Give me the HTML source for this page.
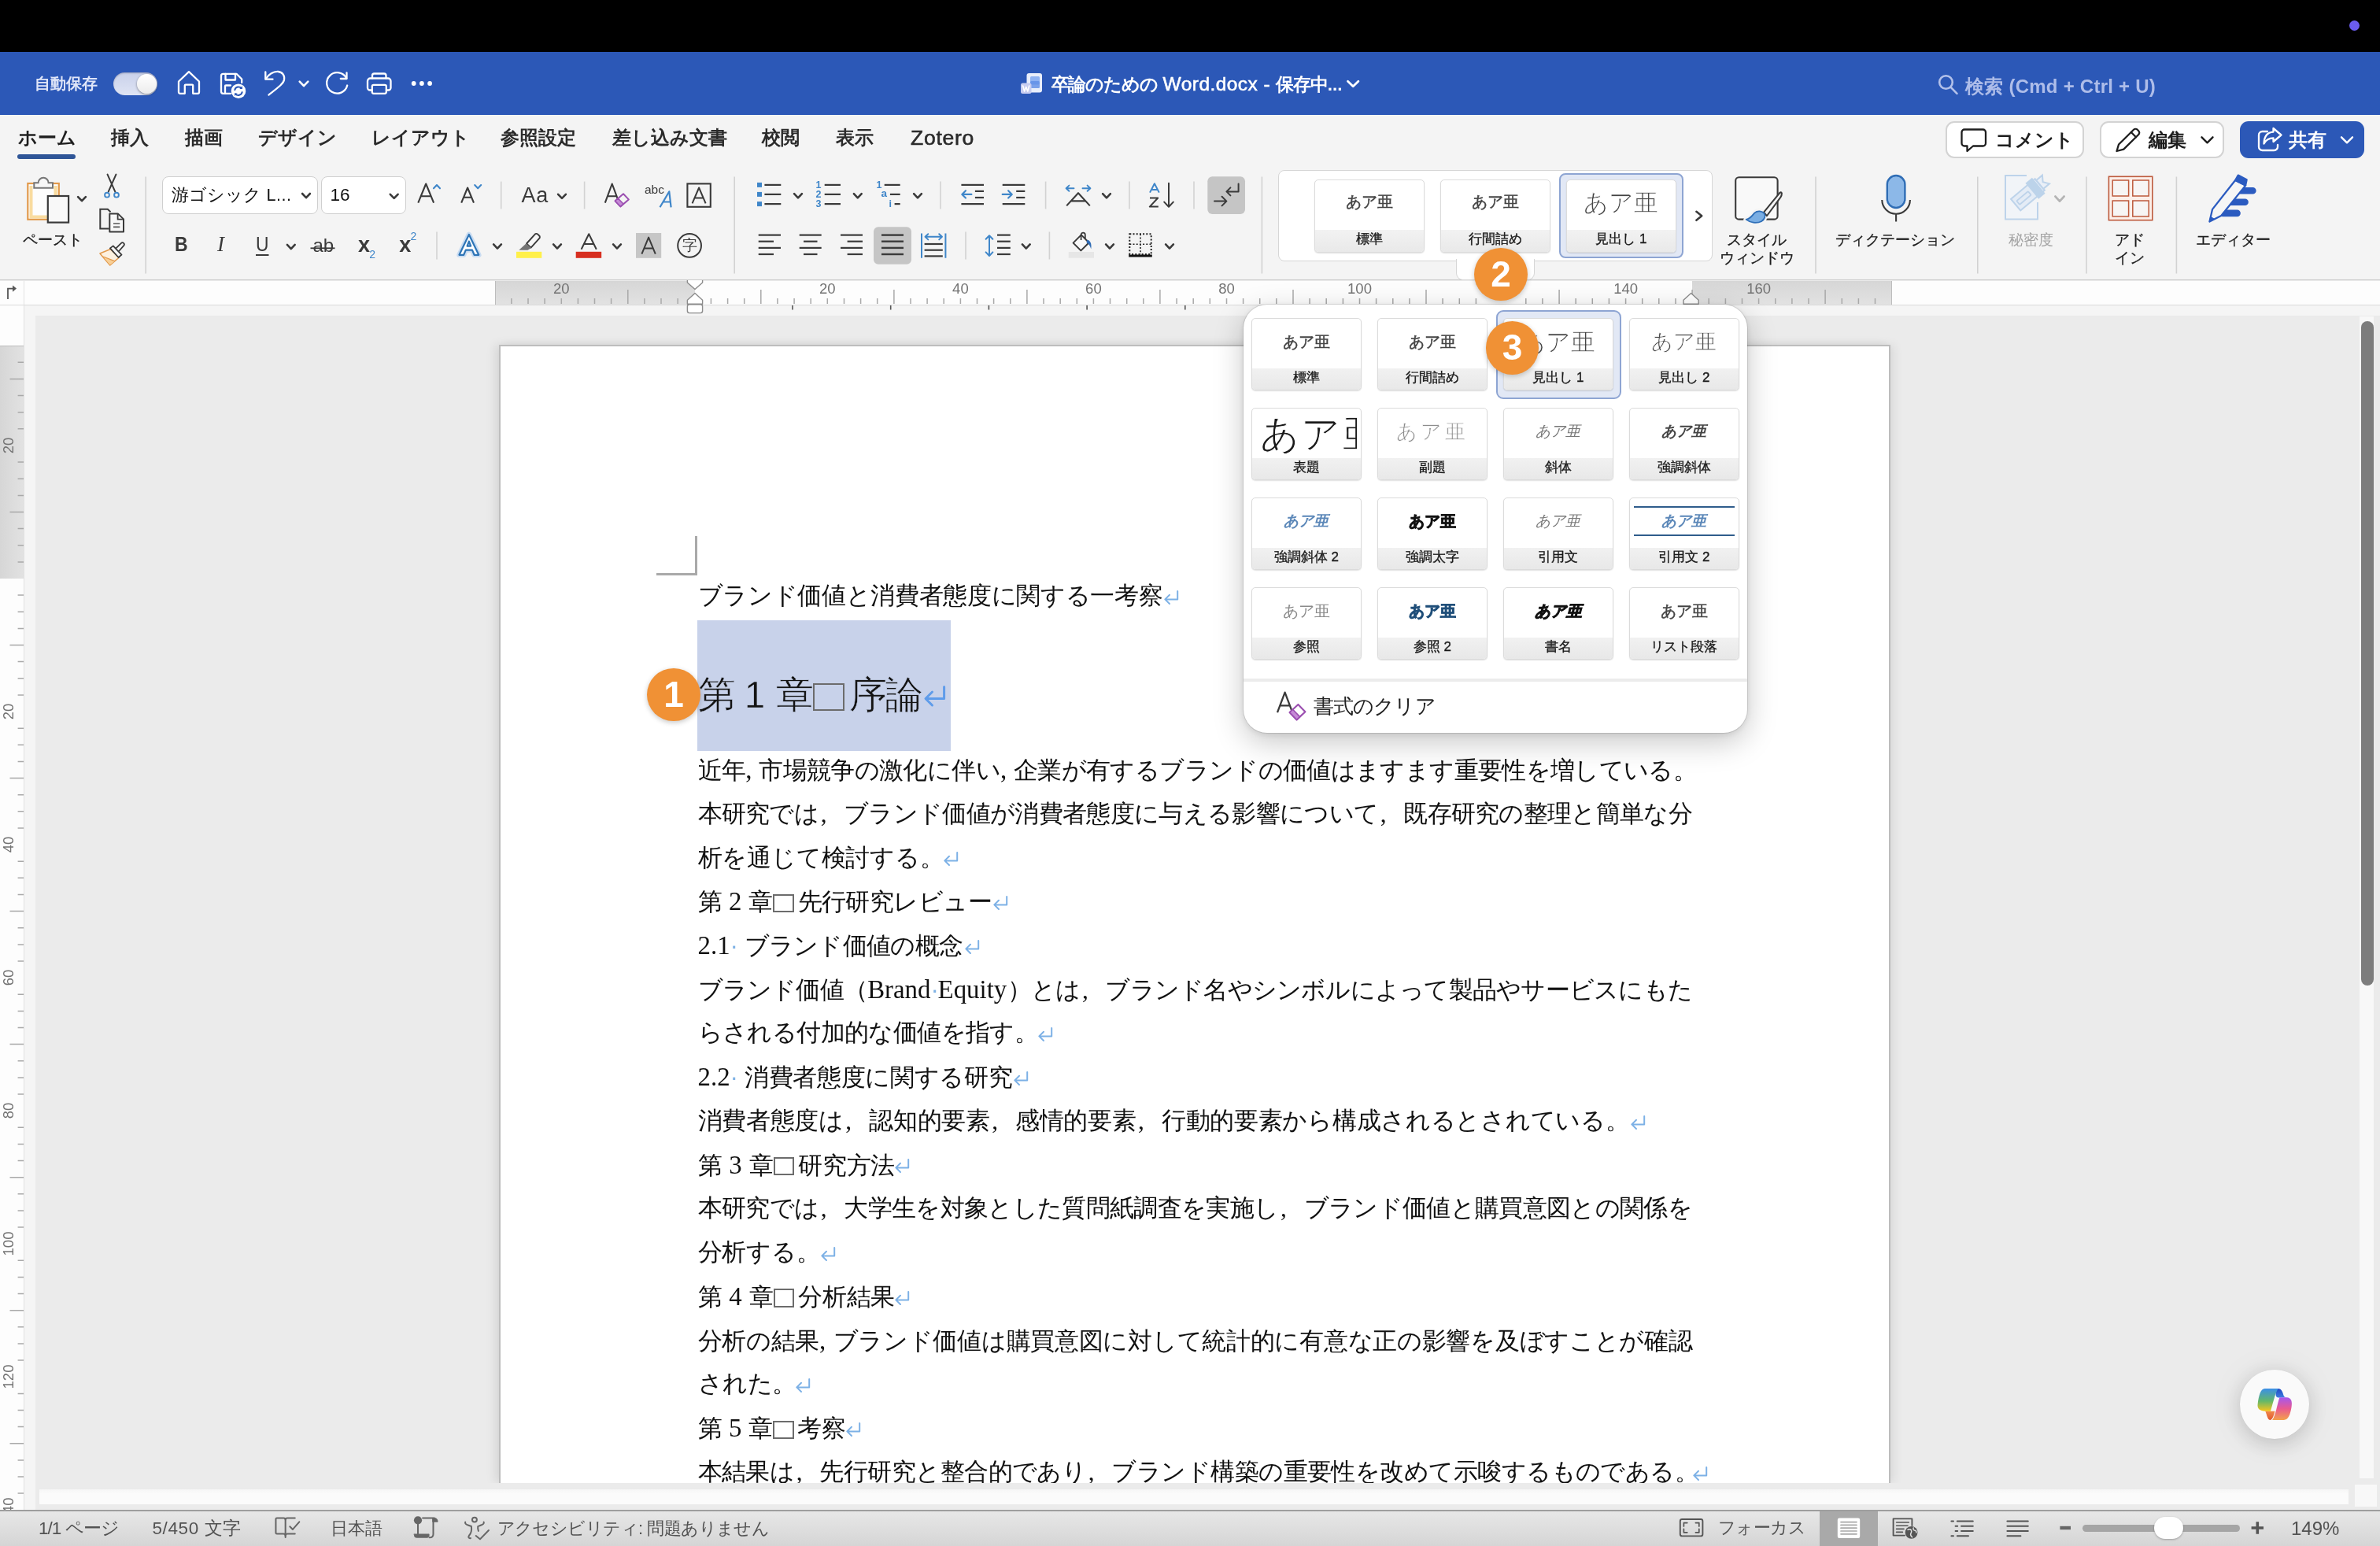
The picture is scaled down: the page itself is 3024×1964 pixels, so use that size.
<!DOCTYPE html>
<html lang="ja">
<head>
<meta charset="utf-8">
<title>卒論のための Word.docx</title>
<style>
html,body{margin:0;padding:0}
body{width:3024px;height:1964px;overflow:hidden;position:relative;background:#ebebeb;font-family:"Liberation Sans",sans-serif;color:#262626;will-change:transform}
div,svg{position:absolute;box-sizing:border-box}
svg{overflow:visible}
.t{white-space:nowrap}
.j{text-align:justify;text-align-last:justify}
.s{font-family:"Liberation Serif",serif}
.m{color:#7fb2e5}
.sq{display:inline-block;width:.84em;height:.74em;border:2px solid #6c6c6c;margin:0 .13em 0 .02em;vertical-align:-.09em;box-sizing:border-box}
.l{letter-spacing:0;font-size:1.05em;font-family:"Liberation Serif",serif}
.fc{display:inline-block;width:1em;text-align:left;letter-spacing:0;text-indent:.08em;font-family:"Liberation Serif",serif}
</style>
</head>
<body>
<div style="left:0px;top:0px;width:3024px;height:66px;background:#000"></div>
<div style="left:2985px;top:26px;width:13px;height:13px;background:#6b5cf0;border-radius:50%"></div>
<div style="left:0px;top:66px;width:3024px;height:80px;background:#2c58b7"></div>
<div class="t" style="top:92.0px;font-size:19.5px;line-height:28px;left:44px;color:#dfe5f8;font-weight:bold;">自動保存</div>
<div style="left:144px;top:92px;width:56px;height:28.5px;border-radius:15px;background:linear-gradient(#c9d1ea,#dfe4f4);box-shadow:inset 0 1px 2px rgba(0,0,40,.25)"></div>
<div style="left:173.5px;top:93.5px;width:25.5px;height:25.5px;border-radius:50%;background:linear-gradient(#fff,#ececec);box-shadow:0 1px 3px rgba(0,0,0,.45)"></div>
<svg style="left:0;top:66px" width="700" height="80" viewBox="0 66 700 80" fill="none" stroke="#fff" stroke-width="2.3" stroke-linecap="round" stroke-linejoin="round"><path d="M227 103.5 L240 91.2 L253 103.5 V117 a1.8 1.8 0 0 1 -1.8 1.8 H245.2 V108.6 a1 1 0 0 0 -1 -1 H235.8 a1 1 0 0 0 -1 1 V118.8 H228.8 a1.8 1.8 0 0 1 -1.8 -1.8 Z"/><path d="M293 118.8 H283.5 a2.5 2.5 0 0 1 -2.5 -2.5 V96.3 a2.5 2.5 0 0 1 2.5 -2.5 H300.5 L307.2 100.5 V105"/><path d="M286.5 94 V101.5 H299 V94"/><path d="M286 118.5 V109.5 a1 1 0 0 1 1 -1 H293"/><circle cx="303" cy="115.7" r="9.3" fill="#fff" stroke="none"/><g stroke="#2c58b7" stroke-width="2"><path d="M298.3 114.3 a5 5 0 0 1 8.6 -2.2"/><path d="M307.7 117.1 a5 5 0 0 1 -8.6 2.2"/></g><path d="M307.9 109.3 v3.6 h-3.6 z M298.1 122.1 v-3.6 h3.6 z" fill="#2c58b7" stroke="none"/><path d="M337.3 91.5 V100.7 H346.5"/><path d="M337.8 100.3 C341 94.5 347.5 90.6 353.5 91 C359 91.5 362 96 361 101.5 C360 106 355.5 109.5 341.5 120.5"/><path d="M380.7 103.7 L386 109.2 L391.3 103.7" stroke-width="2.6"/><path d="M440.5 92.3 V100 H432.8"/><path d="M440.2 99.6 A13.2 13.2 0 1 0 441.2 108.5"/><path d="M473 99.5 V96 a2.5 2.5 0 0 1 2.5 -2.5 H488 a2.5 2.5 0 0 1 2.5 2.5 V99.5"/><path d="M472.5 114.5 H470 a3 3 0 0 1 -3 -3 V103 a3.5 3.5 0 0 1 3.5 -3.5 H493 a3.5 3.5 0 0 1 3.5 3.5 V111.5 a3 3 0 0 1 -3 3 H491"/><rect x="472.8" y="107.8" width="18" height="11" rx="2"/><g fill="#fff" stroke="none"><circle cx="525.7" cy="106" r="2.9"/><circle cx="535.9" cy="106" r="2.9"/><circle cx="546.1" cy="106" r="2.9"/></g></svg>
<svg style="left:1290px;top:86px" width="40" height="40" viewBox="1290 86 40 40"><rect x="1304.5" y="93" width="19.5" height="24.5" rx="3" fill="#e9eefb"/><rect x="1309" y="97" width="12" height="10.5" rx="1.5" fill="#8fb2f2"/><rect x="1309" y="103" width="12" height="9" rx="1.5" fill="#5f8de6" opacity=".8"/><rect x="1297" y="105.5" width="13.5" height="13.5" rx="2.5" fill="#c8cdf0"/><path d="M1299.7 109 l1.9 7 l2.1 -5.6 l2.1 5.6 l1.9 -7" fill="none" stroke="#fff" stroke-width="1.6" stroke-linejoin="round" stroke-linecap="round"/></svg>
<div class="t" style="top:90.5px;font-size:22.5px;line-height:32px;left:1335.5px;color:#fff;font-weight:bold;"><span style="letter-spacing:-1.2px">卒論のための</span><span style="font-weight:normal;-webkit-text-stroke:.55px #fff;font-size:24.5px;letter-spacing:.45px"> Word.docx - </span><span style="letter-spacing:-1.2px">保存中</span>...</div>
<svg style="left:1708px;top:98px" width="24" height="16" viewBox="1708 98 24 16" fill="none" stroke="#fff" stroke-width="2.8" stroke-linecap="round" stroke-linejoin="round"><path d="M1712.5 103.2 L1719.2 109.8 L1725.9 103.2"/></svg>
<svg style="left:2458px;top:92px" width="34" height="32" viewBox="2458 92 34 32" fill="none" stroke="#b3c1ea" stroke-width="2.6" stroke-linecap="round"><circle cx="2472.5" cy="104.5" r="8.3"/><path d="M2478.7 110.9 L2486.5 118.8"/></svg>
<div class="t" style="top:93.5px;font-size:24px;line-height:32px;left:2497px;color:#aebde9;font-weight:bold;letter-spacing:0.25px;">検索 (Cmd + Ctrl + U)</div>
<div style="left:0px;top:146px;width:3024px;height:210px;background:#f4f4f4;border-bottom:1.5px solid #c9c9c9"></div>
<div class="t" style="top:158.0px;font-size:24px;line-height:34px;left:23px;color:#1e1e1e;font-weight:bold;">ホーム</div>
<div class="t" style="top:158.0px;font-size:24px;line-height:34px;left:141px;color:#2b2b2b;font-weight:bold;">挿入</div>
<div class="t" style="top:158.0px;font-size:24px;line-height:34px;left:235px;color:#2b2b2b;font-weight:bold;">描画</div>
<div class="t" style="top:158.0px;font-size:24px;line-height:34px;left:328px;color:#2b2b2b;font-weight:bold;">デザイン</div>
<div class="t" style="top:158.0px;font-size:24px;line-height:34px;left:472px;color:#2b2b2b;font-weight:bold;">レイアウト</div>
<div class="t" style="top:158.0px;font-size:24px;line-height:34px;left:636px;color:#2b2b2b;font-weight:bold;">参照設定</div>
<div class="t" style="top:158.0px;font-size:24px;line-height:34px;left:778px;color:#2b2b2b;font-weight:bold;">差し込み文書</div>
<div class="t" style="top:158.0px;font-size:24px;line-height:34px;left:968px;color:#2b2b2b;font-weight:bold;">校閲</div>
<div class="t" style="top:158.0px;font-size:24px;line-height:34px;left:1062px;color:#2b2b2b;font-weight:bold;">表示</div>
<div class="t" style="top:158.0px;font-size:26.5px;line-height:34px;left:1157px;color:#2b2b2b;letter-spacing:0.75px;-webkit-text-stroke:.6px #2b2b2b;">Zotero</div>
<div style="left:22px;top:196px;width:74px;height:6px;background:#2f5597;border-radius:3px"></div>
<div style="left:2472px;top:154px;width:176px;height:47px;background:#fff;border:2px solid #d3d3d3;border-radius:11px"></div>
<div style="left:2668px;top:154px;width:158px;height:47px;background:#fff;border:2px solid #d3d3d3;border-radius:11px"></div>
<div style="left:2846px;top:154px;width:158px;height:47px;background:#2c58b7;border-radius:11px"></div>
<svg style="left:2480px;top:154px" width="540" height="48" viewBox="2480 154 540 48" fill="none" stroke="#1e1e1e" stroke-width="2.3" stroke-linecap="round" stroke-linejoin="round"><path d="M2496 164.5 H2519.5 a3.5 3.5 0 0 1 3.5 3.5 V182 a3.5 3.5 0 0 1 -3.5 3.5 H2507 L2499.5 192 V185.5 H2496 a3.5 3.5 0 0 1 -3.5 -3.5 V168 a3.5 3.5 0 0 1 3.5 -3.5 Z"/><path d="M2689.5 192 L2692 183.5 L2711 164.8 a3.4 3.4 0 0 1 4.8 0 L2717.2 166.2 a3.4 3.4 0 0 1 0 4.8 L2698.3 189.6 Z"/><path d="M2707.8 168 L2714 174.2"/><path d="M2797.5 174.3 L2804.5 181.3 L2811.5 174.3" stroke-width="2.4"/><g stroke="#fff"><path d="M2881 167 H2874.5 a4.5 4.5 0 0 0 -4.5 4.5 V186.5 a4.5 4.5 0 0 0 4.5 4.5 H2889.5 a4.5 4.5 0 0 0 4.5 -4.5 V184"/><path d="M2888.5 163 L2898.5 171.5 L2888.5 180 V175.3 C2882.5 175.3 2879 177.5 2876.5 182.5 C2876.8 174 2880.5 168 2888.5 167.6 Z"/><path d="M2975 174.3 L2982 181.3 L2989 174.3" stroke-width="2.4"/></g></svg>
<div class="t" style="top:160.5px;font-size:24px;line-height:34px;left:2535px;color:#1e1e1e;font-weight:bold;">コメント</div>
<div class="t" style="top:160.5px;font-size:24px;line-height:34px;left:2730px;color:#1e1e1e;font-weight:bold;">編集</div>
<div class="t" style="top:160.5px;font-size:24px;line-height:34px;left:2908px;color:#fff;font-weight:bold;">共有</div>
<div style="left:206.2px;top:224.3px;width:197.5px;height:47.4px;background:#fff;border:1.5px solid #cfcfcf;border-radius:8px"></div>
<div style="left:408.4px;top:224.3px;width:107.3px;height:47.4px;background:#fff;border:1.5px solid #cfcfcf;border-radius:8px"></div>
<div style="left:1624px;top:216px;width:552px;height:116px;background:#fff;border:1.5px solid #d6d6d6;border-radius:8px"></div>
<div style="left:1850px;top:329px;width:100px;height:27px;background:#fff;border:1.5px solid #d6d6d6;border-top:none;border-radius:0 0 9px 9px"></div>
<div style="left:1981px;top:220px;width:158px;height:108px;background:#e2e8f5;border:2px solid #8ea5d3;border-radius:8px"></div>
<div style="left:1670px;top:228px;width:139.6px;height:92.8px;background:#fff;border:1px solid #dcdcdc;border-radius:5px;box-shadow:0 1px 1.5px rgba(0,0,0,.12)"></div>
<div style="left:1671px;top:292px;width:137.6px;height:27.8px;background:linear-gradient(#f2f2f2,#e9e9e9);border-radius:0 0 4px 4px"></div>
<div class="t" style="top:292.4px;font-size:17px;line-height:24px;left:1670.3px;width:139px;text-align:center;color:#1a1a1a;-webkit-text-stroke:0.35px #1a1a1a;">標準</div>
<div class="t" style="top:242.4px;font-size:20px;line-height:28px;left:1670.3px;width:139px;text-align:center;color:#444;-webkit-text-stroke:0.5px #444;">あア亜</div>
<div style="left:1830px;top:228px;width:139.6px;height:92.8px;background:#fff;border:1px solid #dcdcdc;border-radius:5px;box-shadow:0 1px 1.5px rgba(0,0,0,.12)"></div>
<div style="left:1831px;top:292px;width:137.6px;height:27.8px;background:linear-gradient(#f2f2f2,#e9e9e9);border-radius:0 0 4px 4px"></div>
<div class="t" style="top:292.4px;font-size:17px;line-height:24px;left:1830.3px;width:139px;text-align:center;color:#1a1a1a;-webkit-text-stroke:0.35px #1a1a1a;">行間詰め</div>
<div class="t" style="top:242.4px;font-size:20px;line-height:28px;left:1830.3px;width:139px;text-align:center;color:#444;-webkit-text-stroke:0.5px #444;">あア亜</div>
<div style="left:1990px;top:228px;width:139.6px;height:92.8px;background:#fff;border:1px solid #dcdcdc;border-radius:5px;box-shadow:0 1px 1.5px rgba(0,0,0,.12)"></div>
<div style="left:1991px;top:292px;width:137.6px;height:27.8px;background:linear-gradient(#f2f2f2,#e9e9e9);border-radius:0 0 4px 4px"></div>
<div class="t" style="top:292.4px;font-size:17px;line-height:24px;left:1990.3px;width:139px;text-align:center;color:#1a1a1a;-webkit-text-stroke:0.35px #1a1a1a;">見出し 1</div>
<div class="t" style="top:237.2px;font-size:30.5px;line-height:40px;left:1990.3px;width:139px;text-align:center;color:#444;-webkit-text-stroke:0.7px #fff;">あア亜</div>
<svg style="left:0;top:210px" width="3024" height="150" viewBox="0 210 3024 150"><path d="M185.2 224.5 V347.5" stroke="#d2d2d2" stroke-width="1.6" fill="none"/><path d="M933.2 224.5 V347.5" stroke="#d2d2d2" stroke-width="1.6" fill="none"/><path d="M1603.4 224.5 V347.5" stroke="#d2d2d2" stroke-width="1.6" fill="none"/><path d="M2307 224.5 V347.5" stroke="#d2d2d2" stroke-width="1.6" fill="none"/><path d="M2512.8 224.5 V347.5" stroke="#d2d2d2" stroke-width="1.6" fill="none"/><path d="M2651 224.5 V347.5" stroke="#d2d2d2" stroke-width="1.6" fill="none"/><path d="M2765.4 224.5 V347.5" stroke="#d2d2d2" stroke-width="1.6" fill="none"/><path d="M636.7 230.6 V265.4" stroke="#d2d2d2" stroke-width="1.6" fill="none"/><path d="M742.6 230.6 V265.4" stroke="#d2d2d2" stroke-width="1.6" fill="none"/><path d="M1195 230.6 V265.4" stroke="#d2d2d2" stroke-width="1.6" fill="none"/><path d="M1328.6 230.6 V265.4" stroke="#d2d2d2" stroke-width="1.6" fill="none"/><path d="M1435 230.6 V265.4" stroke="#d2d2d2" stroke-width="1.6" fill="none"/><path d="M1517 230.6 V265.4" stroke="#d2d2d2" stroke-width="1.6" fill="none"/><path d="M555 294.5 V329.5" stroke="#d2d2d2" stroke-width="1.6" fill="none"/><path d="M1227 294.5 V329.5" stroke="#d2d2d2" stroke-width="1.6" fill="none"/><path d="M1333.4 294.5 V329.5" stroke="#d2d2d2" stroke-width="1.6" fill="none"/><rect x="35.3" y="233" width="39.5" height="45.8" fill="#fdfdfd" stroke="#e2994b" stroke-width="2.2"/><path d="M37.5 277.5 V236 H41.5 V273.5 H72.5 V277.5 Z" fill="#f9dca0" stroke="none"/><path d="M68.5 236 H72.8 V250 H68.5 Z" fill="#f9dca0"/><path d="M43.3 238.8 V232.3 H48.6 a6.5 6.5 0 0 1 13 0 H67 V238.8 Z" fill="#f7f7f7" stroke="#777" stroke-width="2"/><rect x="60.8" y="249" width="26.3" height="33.6" fill="#f8f8f8" stroke="#3a3a3a" stroke-width="2.2"/><path d="M99.1 250.1 L104.0 255.2 L108.9 250.1" fill="none" stroke="#3a3a3a" stroke-width="2.6" stroke-linecap="round" stroke-linejoin="round"/><path d="M136.5 221.5 L146.3 243.5 M147.5 221.5 L137.7 243.5" stroke="#3a3a3a" stroke-width="1.9" fill="none" stroke-linecap="round"/><circle cx="136" cy="247.7" r="2.9" fill="none" stroke="#3f86c9" stroke-width="1.9"/><circle cx="148" cy="247.7" r="2.9" fill="none" stroke="#3f86c9" stroke-width="1.9"/><path d="M138.5 290.6 H127.3 V265.8 H136.8 L140.5 269.2" fill="none" stroke="#3a3a3a" stroke-width="2"/><path d="M139.3 271.4 H149.8 L157 278.4 V294.4 H139.3 Z" fill="#f8f8f8" stroke="#3a3a3a" stroke-width="2" stroke-linejoin="round"/><path d="M149.6 271.6 V278.6 H156.8" fill="none" stroke="#3a3a3a" stroke-width="1.8"/><path d="M144 284 H152.3 M144 288.4 H152.3" stroke="#555" stroke-width="1.7"/><svg x="124.25" y="306.64" width="35.31" height="31.95" viewBox="1240 1090 420 380"><path d="M1432 1207 L1272 1272 L1425 1450 L1560 1335 Z" fill="#fdf1e0" stroke="#e2994b" stroke-width="18" stroke-linejoin="round"/><path d="M1322 1322 L1500 1390 L1425 1446 Z" fill="#f8cf96"/><path d="M1322 1320 L1500 1390" stroke="#e2994b" stroke-width="15" fill="none"/><path d="M1500 1208 L1594 1116 a27 27 0 0 1 40 36 L1546 1252" fill="#f8f8f8" stroke="#3a3a3a" stroke-width="21" stroke-linejoin="round"/><path d="M1426 1194 L1472 1158 L1600 1292 L1553 1332 Z" fill="#f8f8f8" stroke="#3a3a3a" stroke-width="21" stroke-linejoin="round"/></svg><path d="M384.1 246.0 L389.0 251.2 L393.9 246.0" fill="none" stroke="#3a3a3a" stroke-width="2.6" stroke-linecap="round" stroke-linejoin="round"/><path d="M495.8 246.8 L500.7 251.9 L505.6 246.8" fill="none" stroke="#3a3a3a" stroke-width="2.6" stroke-linecap="round" stroke-linejoin="round"/><path d="M531.3 257.6 L541.2 233.5 L551.1 257.6 M534.9 249.3 H547.5" fill="none" stroke="#3a3a3a" stroke-width="2.1" stroke-linejoin="round"/><path d="M551 239.3 L555 235 L559 239.3" fill="none" stroke="#3f86c9" stroke-width="2.1" stroke-linecap="round" stroke-linejoin="round"/><path d="M586.2 257.6 L594.1 238.5 L602 257.6 M589.2 250.8 H599" fill="none" stroke="#3a3a3a" stroke-width="2.1" stroke-linejoin="round"/><path d="M603.2 235 L607.2 239.3 L611.2 235" fill="none" stroke="#3f86c9" stroke-width="2.1" stroke-linecap="round" stroke-linejoin="round"/><path d="M709.1 246.8 L714.0 251.9 L718.9 246.8" fill="none" stroke="#3a3a3a" stroke-width="2.6" stroke-linecap="round" stroke-linejoin="round"/><path d="M768.8 257.6 L777.7 233.5 L786.6 257.6 M772 249.3 H783.4" fill="none" stroke="#3a3a3a" stroke-width="2.1" stroke-linejoin="round"/><path d="M781.6 255.2 L792 246.3 L798.8 253.4 L788.3 262.4 Z" fill="#f4f4f4" stroke="#9b4fb0" stroke-width="2" stroke-linejoin="round"/><path d="M781.6 255.2 L785.3 251.9 L792 259.1 L788.3 262.4 Z" fill="#c58ad6" stroke="#9b4fb0" stroke-width="1.5" stroke-linejoin="round"/><path d="M838.5 263.3 L850.3 243.3 L852.6 263.3 M842.6 256.5 H851.6" fill="none" stroke="#3f86c9" stroke-width="2.2" stroke-linejoin="round"/><rect x="873.4" y="233.4" width="29.4" height="29.4" fill="none" stroke="#3a3a3a" stroke-width="2.1"/><path d="M879.6 258.3 L888.1 238.5 L896.6 258.3 M882.7 251.4 H893.5" fill="none" stroke="#3a3a3a" stroke-width="2" stroke-linejoin="round"/><path d="M364.9 310.9 L369.8 316.1 L374.7 310.9" fill="none" stroke="#3a3a3a" stroke-width="2.6" stroke-linecap="round" stroke-linejoin="round"/><path d="M394.5 315.3 H425.5" stroke="#3a3a3a" stroke-width="1.8" fill="none"/><path d="M583.5 323.8 L595.9 298 L608.3 323.8 H602.6 L600 317.6 H591.8 L589.2 323.8 Z M593.6 312.6 H598.2 L595.9 306.6 Z" fill="#fff" stroke="#c9dcf2" stroke-width="6.5" stroke-linejoin="round"/><path d="M583.5 323.8 L595.9 298 L608.3 323.8 H602.6 L600 317.6 H591.8 L589.2 323.8 Z M593.6 312.6 H598.2 L595.9 306.6 Z" fill="#fff" stroke="#2e75b6" stroke-width="2.2" stroke-linejoin="round" fill-rule="evenodd"/><path d="M627.1 310.4 L632.0 315.6 L636.9 310.4" fill="none" stroke="#3a3a3a" stroke-width="2.6" stroke-linecap="round" stroke-linejoin="round"/><rect x="656" y="319.8" width="32.3" height="8" fill="#fff04a"/><path d="M669 309.5 L679.5 297.8 a2.6 2.6 0 0 1 3.8 -0.2 L685 299.2 a2.6 2.6 0 0 1 0.2 3.7 L674.6 314.6 Z" fill="#f7f7f7" stroke="#3a3a3a" stroke-width="1.9" stroke-linejoin="round"/><path d="M668.6 309.2 L675 315 L670.5 317.8 H659.3 Z" fill="#757575"/><path d="M703.1 310.4 L708.0 315.6 L712.9 310.4" fill="none" stroke="#3a3a3a" stroke-width="2.6" stroke-linecap="round" stroke-linejoin="round"/><rect x="731.7" y="319.8" width="32.5" height="8" fill="#d72f20"/><path d="M738.6 316.8 L748.2 297.2 L757.8 316.8 M742 310 H754.4" fill="none" stroke="#3a3a3a" stroke-width="2" stroke-linejoin="round"/><path d="M779.1 310.4 L784.0 315.6 L788.9 310.4" fill="none" stroke="#3a3a3a" stroke-width="2.6" stroke-linecap="round" stroke-linejoin="round"/><rect x="808" y="296" width="32.2" height="31.8" fill="#c6c6c6"/><path d="M815.4 322.6 L824.1 301.6 L832.8 322.6 M818.6 315.4 H829.6" fill="none" stroke="#3a3a3a" stroke-width="2" stroke-linejoin="round"/><circle cx="876.1" cy="311.9" r="14.9" fill="none" stroke="#3a3a3a" stroke-width="2"/><rect x="962" y="231.9" width="6" height="6" fill="#3f86c9"/><path d="M971.4 234.9 H992.3" stroke="#3a3a3a" stroke-width="2.2" fill="none"/><path d="M1047.7 234.9 H1068" stroke="#3a3a3a" stroke-width="2.2" fill="none"/><rect x="962" y="243.9" width="6" height="6" fill="#3f86c9"/><path d="M971.4 246.9 H992.3" stroke="#3a3a3a" stroke-width="2.2" fill="none"/><path d="M1047.7 246.9 H1068" stroke="#3a3a3a" stroke-width="2.2" fill="none"/><rect x="962" y="256.1" width="6" height="6" fill="#3f86c9"/><path d="M971.4 259.1 H992.3" stroke="#3a3a3a" stroke-width="2.2" fill="none"/><path d="M1047.7 259.1 H1068" stroke="#3a3a3a" stroke-width="2.2" fill="none"/><path d="M1009.1 246.2 L1014.0 251.4 L1018.9 246.2" fill="none" stroke="#3a3a3a" stroke-width="2.6" stroke-linecap="round" stroke-linejoin="round"/><path d="M1084.9 246.2 L1089.8 251.4 L1094.7 246.2" fill="none" stroke="#3a3a3a" stroke-width="2.6" stroke-linecap="round" stroke-linejoin="round"/><path d="M1123.7 234.9 H1143.7" stroke="#3a3a3a" stroke-width="2.2" fill="none"/><path d="M1130.9 246.9 H1143.7" stroke="#3a3a3a" stroke-width="2.2" fill="none"/><path d="M1136.6 259.1 H1143.7" stroke="#3a3a3a" stroke-width="2.2" fill="none"/><path d="M1161.1 246.2 L1166.0 251.4 L1170.9 246.2" fill="none" stroke="#3a3a3a" stroke-width="2.6" stroke-linecap="round" stroke-linejoin="round"/><path d="M1221.4 234.9 H1250.0" stroke="#3a3a3a" stroke-width="2.2" fill="none"/><path d="M1221.4 259.1 H1250.0" stroke="#3a3a3a" stroke-width="2.2" fill="none"/><path d="M1238.9 242.9 H1250.0" stroke="#3a3a3a" stroke-width="2.2" fill="none"/><path d="M1238.9 251 H1250.0" stroke="#3a3a3a" stroke-width="2.2" fill="none"/><path d="M1234.4 246.9 H1222.4 M1227.0 242.2 L1222.3000000000002 246.9 L1227.0 251.6" fill="none" stroke="#3f86c9" stroke-width="2.1" stroke-linecap="round" stroke-linejoin="round"/><path d="M1273.7 234.9 H1302.3" stroke="#3a3a3a" stroke-width="2.2" fill="none"/><path d="M1273.7 259.1 H1302.3" stroke="#3a3a3a" stroke-width="2.2" fill="none"/><path d="M1291.2 242.9 H1302.3" stroke="#3a3a3a" stroke-width="2.2" fill="none"/><path d="M1291.2 251 H1302.3" stroke="#3a3a3a" stroke-width="2.2" fill="none"/><path d="M1273.7 246.9 H1285.7 M1281.1000000000001 242.2 L1285.8 246.9 L1281.1000000000001 251.6" fill="none" stroke="#3f86c9" stroke-width="2.1" stroke-linecap="round" stroke-linejoin="round"/><path d="M1355.2 261.4 L1370 245.2 L1384.8 261.4 M1360.6 255.4 H1379.4" fill="none" stroke="#3a3a3a" stroke-width="2.1" stroke-linejoin="round"/><path d="M1364.5 239.2 H1354.6 M1358.4 235.6 L1354.6 239.2 L1358.4 242.8 M1375.5 239.2 H1385.4 M1381.6 235.6 L1385.4 239.2 L1381.6 242.8" fill="none" stroke="#3f86c9" stroke-width="1.9" stroke-linecap="round" stroke-linejoin="round"/><path d="M1401.1 246.2 L1406.0 251.4 L1410.9 246.2" fill="none" stroke="#3a3a3a" stroke-width="2.6" stroke-linecap="round" stroke-linejoin="round"/><path d="M1461 244.6 L1466.9 233.2 L1472.8 244.6 M1463 240.9 H1470.8" fill="none" stroke="#3f86c9" stroke-width="2" stroke-linejoin="round"/><path d="M1461 251.5 H1471.2 L1460.8 262.6 H1471.8" fill="none" stroke="#3a3a3a" stroke-width="2" stroke-linejoin="round"/><path d="M1485 232.8 V262.5 M1479.2 256.6 L1485 262.7 L1490.8 256.6" fill="none" stroke="#3a3a3a" stroke-width="2" stroke-linecap="round" stroke-linejoin="round"/><rect x="1534.3" y="224.3" width="47.7" height="47.7" rx="6" fill="#c5c5c5"/><path d="M1543 255.6 H1558 M1552.6 249.8 L1558.4 255.6 L1552.6 261.4" fill="none" stroke="#3a3a3a" stroke-width="2" stroke-linecap="round" stroke-linejoin="round"/><path d="M1573.6 233.4 V243.4 H1558.6 M1563.4 238.4 L1558.4 243.4 L1563.4 248.4" fill="none" stroke="#3a3a3a" stroke-width="2" stroke-linecap="round" stroke-linejoin="round"/><path d="M963.7 298.6 H992" stroke="#3a3a3a" stroke-width="2.2" fill="none"/><path d="M1015.7 298.6 H1043.7" stroke="#3a3a3a" stroke-width="2.2" fill="none"/><path d="M1068 298.6 H1096" stroke="#3a3a3a" stroke-width="2.2" fill="none"/><path d="M963.7 306.7 H983" stroke="#3a3a3a" stroke-width="2.2" fill="none"/><path d="M1021 306.7 H1038.5" stroke="#3a3a3a" stroke-width="2.2" fill="none"/><path d="M1076.6 306.7 H1096" stroke="#3a3a3a" stroke-width="2.2" fill="none"/><path d="M963.7 314.9 H992" stroke="#3a3a3a" stroke-width="2.2" fill="none"/><path d="M1015.7 314.9 H1043.7" stroke="#3a3a3a" stroke-width="2.2" fill="none"/><path d="M1068 314.9 H1096" stroke="#3a3a3a" stroke-width="2.2" fill="none"/><path d="M963.7 323 H983" stroke="#3a3a3a" stroke-width="2.2" fill="none"/><path d="M1021 323 H1038.5" stroke="#3a3a3a" stroke-width="2.2" fill="none"/><path d="M1076.6 323 H1096" stroke="#3a3a3a" stroke-width="2.2" fill="none"/><rect x="1110" y="288.3" width="48" height="47.4" rx="6" fill="#c5c5c5"/><path d="M1120 298.6 H1148" stroke="#3a3a3a" stroke-width="2.4" fill="none"/><path d="M1120 306.7 H1148" stroke="#3a3a3a" stroke-width="2.4" fill="none"/><path d="M1120 314.9 H1148" stroke="#3a3a3a" stroke-width="2.4" fill="none"/><path d="M1120 323 H1148" stroke="#3a3a3a" stroke-width="2.4" fill="none"/><path d="M1171 296.5 V327.7 M1201.4 296.5 V327.7" stroke="#3f86c9" stroke-width="2" fill="none"/><path d="M1175.5 300.8 H1197 M1179.3 297.2 L1175.5 300.8 L1179.3 304.4 M1193.2 297.2 L1197 300.8 L1193.2 304.4" fill="none" stroke="#3f86c9" stroke-width="1.9" stroke-linecap="round" stroke-linejoin="round"/><path d="M1174.6 310 H1197.8" stroke="#3a3a3a" stroke-width="2.2" fill="none"/><path d="M1174.6 317.7 H1197.8" stroke="#3a3a3a" stroke-width="2.2" fill="none"/><path d="M1174.6 325.4 H1197.8" stroke="#3a3a3a" stroke-width="2.2" fill="none"/><path d="M1257 299.5 V324.8 M1252.6 303.8 L1257 299.2 L1261.4 303.8 M1252.6 320.4 L1257 325 L1261.4 320.4" fill="none" stroke="#3f86c9" stroke-width="2" stroke-linecap="round" stroke-linejoin="round"/><path d="M1267 298.6 H1283.8" stroke="#3a3a3a" stroke-width="2.2" fill="none"/><path d="M1267 306.7 H1283.8" stroke="#3a3a3a" stroke-width="2.2" fill="none"/><path d="M1267 314.9 H1283.8" stroke="#3a3a3a" stroke-width="2.2" fill="none"/><path d="M1267 323 H1283.8" stroke="#3a3a3a" stroke-width="2.2" fill="none"/><path d="M1298.9 310.4 L1303.8 315.6 L1308.7 310.4" fill="none" stroke="#3a3a3a" stroke-width="2.6" stroke-linecap="round" stroke-linejoin="round"/><rect x="1357.7" y="320" width="32.3" height="7.7" fill="#e6e6e6"/><path d="M1363.6 308.6 L1373.8 298.4 L1383.6 308.2 L1373.4 318.4 Z" fill="#f8f8f8" stroke="#3a3a3a" stroke-width="2" stroke-linejoin="round"/><path d="M1373.6 305 V298.3 a2.6 2.6 0 0 1 5.2 0 V303.2" fill="none" stroke="#3a3a3a" stroke-width="1.8"/><path d="M1381.2 304.8 C1385.6 305.3 1387.2 309.8 1386.3 316.2 C1384.8 311.6 1383.4 309.6 1380.6 308.4 Z" fill="#2e6bb5"/><path d="M1405.1 310.4 L1410.0 315.6 L1414.9 310.4" fill="none" stroke="#3a3a3a" stroke-width="2.6" stroke-linecap="round" stroke-linejoin="round"/><rect x="1435.3" y="297.3" width="27.4" height="25.6" fill="none" stroke="#222" stroke-width="2" stroke-dasharray="2 2.2"/><path d="M1449 297.3 V323 M1435.3 310.2 H1462.7" stroke="#222" stroke-width="1.6" stroke-dasharray="2 2.2" fill="none"/><path d="M1434.2 325 H1463.8" stroke="#111" stroke-width="3" fill="none"/><path d="M1481.1 310.4 L1486.0 315.6 L1490.9 310.4" fill="none" stroke="#3a3a3a" stroke-width="2.6" stroke-linecap="round" stroke-linejoin="round"/><path d="M2155.4 268.8 L2162.2 274.3 L2155.4 279.8" fill="none" stroke="#3a3a3a" stroke-width="2.6" stroke-linecap="round" stroke-linejoin="round"/><rect x="2205.2" y="225.2" width="53.4" height="53.4" rx="4.2" fill="#f9f9f9" stroke="#3a3a3a" stroke-width="2.1"/><svg x="2180" y="212" width="460" height="80.02" viewBox="0 0 2380 414"><path d="M200 346 C232 340 240 318 256 302 C275 285 305 290 318 305 C330 322 322 345 300 358 C268 375 225 365 200 346 Z" fill="#f4f4f4" stroke="#f4f4f4" stroke-width="34" stroke-linejoin="round"/><path d="M316 298 L416 176 Q430 160 434 174 Q434 188 426 200 L336 322 Z" fill="#f6f6f6" stroke="#3a3a3a" stroke-width="10.5" stroke-linejoin="round"/><path d="M200 346 C232 340 240 318 256 302 C275 285 305 290 318 305 C330 322 322 345 300 358 C268 375 225 365 200 346 Z" fill="#7aaee3" stroke="#2f6fb8" stroke-width="9.5" stroke-linejoin="round"/></svg><rect x="2397.8" y="223" width="22.6" height="41" rx="11.3" fill="#8cb8e8" stroke="#2f6db5" stroke-width="2.4"/><path d="M2391.3 254 a17.8 17.8 0 0 0 35.6 0 M2409.1 271.8 V281.4" fill="none" stroke="#3a3a3a" stroke-width="2.1"/><path d="M2575 223 H2548 V278.5 H2589 V257" fill="#f1f4f8" stroke="#bdd3ea" stroke-width="2"/><g transform="rotate(-40 2578 246)"><rect x="2556" y="236.5" width="40" height="19" fill="#e4ecf6" stroke="#bdd3ea" stroke-width="2"/><rect x="2583" y="233" width="11" height="26" fill="#bcd3ea"/><path d="M2596 239 H2606 L2601 246 L2606 253 H2596 Z" fill="#eaf0f8" stroke="#bdd3ea" stroke-width="2"/><rect x="2560" y="243" width="19" height="6" rx="1" fill="none" stroke="#bdd3ea" stroke-width="1.8"/></g><path d="M2611.5 249.6 L2617.0 255.6 L2622.5 249.6" fill="none" stroke="#b4b4b4" stroke-width="2.8" stroke-linecap="round" stroke-linejoin="round"/><rect x="2679.4" y="224.3" width="55.4" height="55.4" fill="#fcefe9" stroke="#bd5a3c" stroke-width="1.6"/><rect x="2684.2" y="229" width="20.4" height="20" fill="#f7f5f4" stroke="#bd5a3c" stroke-width="1.5"/><rect x="2709.8" y="229" width="20.4" height="20" fill="#f7f5f4" stroke="#bd5a3c" stroke-width="1.5"/><rect x="2684.2" y="255" width="20.4" height="20" fill="#f7f5f4" stroke="#bd5a3c" stroke-width="1.5"/><rect x="2709.8" y="255" width="20.4" height="20" fill="#f7f5f4" stroke="#bd5a3c" stroke-width="1.5"/><svg x="2802.3" y="218.05" width="69.58" height="66.56" viewBox="1800 40 460 440"><path d="M2085 200 H2197 M2012 296 H2132 M1945 389 H2066" stroke="#2b5bc0" stroke-width="57" stroke-linecap="round" fill="none"/><path d="M2050 112 L2136 156 L1932 410 L1834 460 L1858 356 Z" fill="#f6f6f6" stroke="#2b5bc0" stroke-width="15" stroke-linejoin="round"/><path d="M2050 112 L2074 70 L2146 108 L2136 156 Z" fill="#2b5bc0" stroke="#2b5bc0" stroke-width="15" stroke-linejoin="round"/><path d="M1834 460 L1843 420 L1872 438 Z" fill="#2b5bc0" stroke="#2b5bc0" stroke-width="8" stroke-linejoin="round"/></svg></svg>
<div class="t" style="top:291.3px;font-size:19.2px;line-height:28px;left:6.5px;width:120px;text-align:center;color:#1e1e1e;-webkit-text-stroke:0.3px #1e1e1e;">ペースト</div>
<div class="t" style="top:232.6px;font-size:21.6px;line-height:30px;left:218px;color:#111;">游ゴシック<span style="letter-spacing:0.5px"> L...</span></div>
<div class="t" style="top:232.8px;font-size:22.5px;line-height:30px;left:419.5px;color:#111;">16</div>
<div class="t" style="top:230.2px;font-size:27px;line-height:36px;left:662.5px;color:#3a3a3a;letter-spacing:0.8px;">Aa</div>
<div class="t" style="top:230.6px;font-size:15.5px;line-height:20px;left:819px;color:#3a3a3a;">abc</div>
<div class="t" style="top:292.2px;font-size:26.5px;line-height:36px;left:222.4px;color:#3a3a3a;font-weight:bold;transform:scaleX(.87);transform-origin:0 50%;">B</div>
<div class="t s" style="top:292.2px;font-size:27px;line-height:36px;left:276px;color:#3a3a3a;font-style:italic;">I</div>
<div class="t" style="top:292.4px;font-size:26.5px;line-height:36px;left:324.6px;color:#3a3a3a;text-decoration:underline;text-underline-offset:4px;text-decoration-thickness:2px;transform:scaleX(.86);transform-origin:0 50%;">U</div>
<div class="t" style="top:295.5px;font-size:24px;line-height:32px;left:397.5px;color:#3a3a3a;">ab</div>
<div class="t" style="top:293.0px;font-size:27px;line-height:36px;left:455px;color:#3a3a3a;font-weight:bold;">x</div>
<div class="t" style="top:313.6px;font-size:14px;line-height:18px;left:469.2px;color:#3f86c9;">2</div>
<div class="t" style="top:293.0px;font-size:27px;line-height:36px;left:507.2px;color:#3a3a3a;font-weight:bold;">x</div>
<div class="t" style="top:291.4px;font-size:14px;line-height:18px;left:521.6px;color:#3f86c9;">2</div>
<div class="t" style="top:298.6px;font-size:18.5px;line-height:26px;left:856.1px;width:40px;text-align:center;color:#3a3a3a;">字</div>
<div class="t" style="top:228.2px;font-size:12.5px;line-height:14px;left:1036.6px;color:#3f86c9;font-weight:bold;">1</div>
<div class="t" style="top:240.2px;font-size:12.5px;line-height:14px;left:1036.6px;color:#3f86c9;font-weight:bold;">2</div>
<div class="t" style="top:252.4px;font-size:12.5px;line-height:14px;left:1036.6px;color:#3f86c9;font-weight:bold;">3</div>
<div class="t" style="top:228.2px;font-size:12.5px;line-height:14px;left:1113.6px;color:#3f86c9;font-weight:bold;">1</div>
<div class="t" style="top:239.4px;font-size:13.5px;line-height:14px;left:1119.4px;color:#3f86c9;font-weight:bold;">a</div>
<div class="t" style="top:252.2px;font-size:12.5px;line-height:14px;left:1129.4px;color:#3f86c9;font-weight:bold;">i</div>
<div class="t" style="top:291.8px;font-size:18.9px;line-height:26px;left:2162.0px;width:140px;text-align:center;color:#1e1e1e;-webkit-text-stroke:0.3px #1e1e1e;">スタイル</div>
<div class="t" style="top:314.6px;font-size:18.9px;line-height:26px;left:2162.5px;width:140px;text-align:center;color:#1e1e1e;-webkit-text-stroke:0.3px #1e1e1e;">ウィンドウ</div>
<div class="t" style="top:291.8px;font-size:18.9px;line-height:26px;left:2308.0px;width:200px;text-align:center;color:#1e1e1e;-webkit-text-stroke:0.3px #1e1e1e;">ディクテーション</div>
<div class="t" style="top:291.8px;font-size:18.9px;line-height:26px;left:2510.0px;width:140px;text-align:center;color:#a3a3a3;">秘密度</div>
<div class="t" style="top:291.8px;font-size:18.9px;line-height:26px;left:2656.0px;width:100px;text-align:center;color:#1e1e1e;-webkit-text-stroke:0.3px #1e1e1e;">アド</div>
<div class="t" style="top:314.6px;font-size:18.9px;line-height:26px;left:2656.0px;width:100px;text-align:center;color:#1e1e1e;-webkit-text-stroke:0.3px #1e1e1e;">イン</div>
<div class="t" style="top:291.8px;font-size:18.9px;line-height:26px;left:2757.5px;width:160px;text-align:center;color:#1e1e1e;-webkit-text-stroke:0.3px #1e1e1e;">エディター</div>
<div style="left:0px;top:356.5px;width:3024px;height:31px;background:#fdfdfd;border-bottom:1.5px solid #dadada"></div>
<div style="left:0px;top:387.5px;width:3024px;height:13px;background:#f5f5f5"></div>
<div style="left:628.6px;top:356.5px;width:254.4px;height:30.5px;background:linear-gradient(#d6d6d6,#e2e2e2);border-left:1.5px solid #bdbdbd"></div>
<div style="left:2149.5px;top:356.5px;width:254px;height:30.5px;background:linear-gradient(#d6d6d6,#e2e2e2);border-right:1.5px solid #bdbdbd"></div>
<svg style="left:0;top:350px" width="3024" height="52" viewBox="0 350 3024 52"><path d="M649.9 379 V386M671.0 379 V386M692.1 379 V386M713.3 379 V386M734.4 379 V386M755.5 379 V386M776.6 379 V386M797.8 368 V386M818.9 379 V386M840.0 379 V386M861.2 379 V386M903.4 379 V386M924.6 379 V386M945.7 379 V386M966.8 368 V386M987.9 379 V386M1009.1 379 V386M1030.2 379 V386M1051.3 379 V386M1072.5 379 V386M1093.6 379 V386M1114.7 379 V386M1135.9 368 V386M1157.0 379 V386M1178.1 379 V386M1199.2 379 V386M1220.4 379 V386M1241.5 379 V386M1262.6 379 V386M1283.8 379 V386M1304.9 368 V386M1326.0 379 V386M1347.2 379 V386M1368.3 379 V386M1389.4 379 V386M1410.5 379 V386M1431.7 379 V386M1452.8 379 V386M1473.9 368 V386M1495.1 379 V386M1516.2 379 V386M1537.3 379 V386M1558.5 379 V386M1579.6 379 V386M1600.7 379 V386M1621.8 379 V386M1643.0 368 V386M1664.1 379 V386M1685.2 379 V386M1706.4 379 V386M1727.5 379 V386M1748.6 379 V386M1769.8 379 V386M1790.9 379 V386M1812.0 368 V386M1833.1 379 V386M1854.3 379 V386M1875.4 379 V386M1896.5 379 V386M1917.7 379 V386M1938.8 379 V386M1959.9 379 V386M1981.1 368 V386M2002.2 379 V386M2023.3 379 V386M2044.4 379 V386M2065.6 379 V386M2086.7 379 V386M2107.8 379 V386M2129.0 379 V386M2150.1 368 V386M2171.2 379 V386M2192.4 379 V386M2213.5 379 V386M2234.6 379 V386M2255.8 379 V386M2276.9 379 V386M2298.0 379 V386M2319.1 368 V386M2340.3 379 V386M2361.4 379 V386M2382.5 379 V386" stroke="#a9a9a9" stroke-width="1.5" fill="none"/><path d="M1007.0 388 V393.4M1131.7 388 V393.4M1256.4 388 V393.4M1381.1 388 V393.4M1505.8 388 V393.4M1630.5 388 V393.4M1755.2 388 V393.4M1879.9 388 V393.4M2004.6 388 V393.4M2129.3 388 V393.4" stroke="#555" stroke-width="1.6" fill="none"/><g fill="#fff" stroke="#8c8c8c" stroke-width="1.4" stroke-linejoin="round"><path d="M873.4 356 V359 L883 367.6 L892.6 359 V356"/><path d="M873.4 386.2 V381.2 L883 372.4 L892.6 381.2 V386.2 Z"/><rect x="873.4" y="386.8" width="19.2" height="10.8" rx="2.5"/><path d="M2139 386.2 V381.2 L2148.6 372.4 L2158.2 381.2 V386.2 Z"/></g></svg>
<div class="t" style="top:355.6px;font-size:18.5px;line-height:22px;left:683.3px;width:60px;text-align:center;color:#737373;">20</div>
<div class="t" style="top:355.6px;font-size:18.5px;line-height:22px;left:1021.3px;width:60px;text-align:center;color:#737373;">20</div>
<div class="t" style="top:355.6px;font-size:18.5px;line-height:22px;left:1190.4px;width:60px;text-align:center;color:#737373;">40</div>
<div class="t" style="top:355.6px;font-size:18.5px;line-height:22px;left:1359.4px;width:60px;text-align:center;color:#737373;">60</div>
<div class="t" style="top:355.6px;font-size:18.5px;line-height:22px;left:1528.5px;width:60px;text-align:center;color:#737373;">80</div>
<div class="t" style="top:355.6px;font-size:18.5px;line-height:22px;left:1697.5px;width:60px;text-align:center;color:#737373;">100</div>
<div class="t" style="top:355.6px;font-size:18.5px;line-height:22px;left:2035.6px;width:60px;text-align:center;color:#737373;">140</div>
<div class="t" style="top:355.6px;font-size:18.5px;line-height:22px;left:2204.6px;width:60px;text-align:center;color:#737373;">160</div>
<div style="left:0px;top:356.5px;width:31px;height:31px;background:#fdfdfd;border-right:1.5px solid #e2e2e2;border-bottom:1.5px solid #dadada"></div>
<svg style="left:6px;top:360px" width="20" height="24" viewBox="0 0 20 24"><path d="M4 20 V6.6 H10.5" fill="none" stroke="#555" stroke-width="1.8"/><path d="M10 2.4 L15 6.6 L10 10.8 Z" fill="#555"/></svg>
<div style="left:0px;top:388px;width:31px;height:1530px;background:#fdfdfd;border-right:1.5px solid #e0e0e0"></div>
<div style="left:31px;top:388px;width:13.5px;height:1530px;background:#f5f5f5"></div>
<div style="left:0px;top:438.5px;width:30px;height:296.5px;background:linear-gradient(90deg,#d6d6d6,#e2e2e2);border-top:1.5px solid #bdbdbd"></div>
<svg style="left:0;top:400px" width="32" height="1518" viewBox="0 400 32 1518"><path d="M22.6 460.3 H30M12.5 481.4 H30M22.6 502.6 H30M22.6 523.7 H30M22.6 544.8 H30M22.6 587.1 H30M22.6 608.2 H30M22.6 629.4 H30M12.5 650.5 H30M22.6 671.6 H30M22.6 692.7 H30M22.6 713.9 H30M22.6 756.1 H30M22.6 777.3 H30M22.6 798.4 H30M12.5 819.5 H30M22.6 840.6 H30M22.6 861.8 H30M22.6 882.9 H30M22.6 925.2 H30M22.6 946.3 H30M22.6 967.4 H30M12.5 988.6 H30M22.6 1009.7 H30M22.6 1030.8 H30M22.6 1052.0 H30M22.6 1094.2 H30M22.6 1115.3 H30M22.6 1136.5 H30M12.5 1157.6 H30M22.6 1178.7 H30M22.6 1199.9 H30M22.6 1221.0 H30M22.6 1263.2 H30M22.6 1284.4 H30M22.6 1305.5 H30M12.5 1326.6 H30M22.6 1347.8 H30M22.6 1368.9 H30M22.6 1390.0 H30M22.6 1432.3 H30M22.6 1453.4 H30M22.6 1474.5 H30M12.5 1495.7 H30M22.6 1516.8 H30M22.6 1537.9 H30M22.6 1559.1 H30M22.6 1601.3 H30M22.6 1622.5 H30M22.6 1643.6 H30M12.5 1664.7 H30M22.6 1685.8 H30M22.6 1707.0 H30M22.6 1728.1 H30M22.6 1770.4 H30M22.6 1791.5 H30M22.6 1812.6 H30M12.5 1833.8 H30M22.6 1854.9 H30M22.6 1876.0 H30M22.6 1897.1 H30" stroke="#a9a9a9" stroke-width="1.5" fill="none"/></svg>
<div class="t" style="left:-19px;top:555.0px;width:60px;height:22px;line-height:22px;font-size:18.5px;color:#737373;text-align:center;transform:rotate(-90deg)">20</div>
<div class="t" style="left:-19px;top:893.0px;width:60px;height:22px;line-height:22px;font-size:18.5px;color:#737373;text-align:center;transform:rotate(-90deg)">20</div>
<div class="t" style="left:-19px;top:1062.1px;width:60px;height:22px;line-height:22px;font-size:18.5px;color:#737373;text-align:center;transform:rotate(-90deg)">40</div>
<div class="t" style="left:-19px;top:1231.1px;width:60px;height:22px;line-height:22px;font-size:18.5px;color:#737373;text-align:center;transform:rotate(-90deg)">60</div>
<div class="t" style="left:-19px;top:1400.2px;width:60px;height:22px;line-height:22px;font-size:18.5px;color:#737373;text-align:center;transform:rotate(-90deg)">80</div>
<div class="t" style="left:-19px;top:1569.2px;width:60px;height:22px;line-height:22px;font-size:18.5px;color:#737373;text-align:center;transform:rotate(-90deg)">100</div>
<div class="t" style="left:-19px;top:1738.2px;width:60px;height:22px;line-height:22px;font-size:18.5px;color:#737373;text-align:center;transform:rotate(-90deg)">120</div>
<div class="t" style="left:-19px;top:1907.3px;width:60px;height:22px;line-height:22px;font-size:18.5px;color:#737373;text-align:center;transform:rotate(-90deg)">140</div>
<div style="left:634px;top:438.2px;width:1767.5px;height:1446px;background:#fff;border:2px solid #bdbdbd;border-bottom:none;box-shadow:-5px 0 12px rgba(0,0,0,.09),5px 0 12px rgba(0,0,0,.07)"></div>
<div style="left:834px;top:681px;width:51.5px;height:49.5px;border-right:3px solid #a9a9a9;border-bottom:3px solid #a9a9a9"></div>
<div style="left:886px;top:788px;width:321.5px;height:166px;background:#c8d2ea"></div>
<div class="t j" style="top:734.6px;font-size:31.3px;line-height:44px;left:886.5px;width:590px;color:#111;letter-spacing:-1.3px;">ブランド価値と消費者態度に関する一考察</div>
<svg style="left:1478px;top:747.5px" width="21" height="23" viewBox="0 0 21 23" fill="none" stroke="#7db1e6" stroke-width="2" stroke-linecap="round" stroke-linejoin="round"><path d="M18.2 3 V13.4 H2.6 M8 7.8 L2.3 13.4 L8 19"/></svg>
<div class="t j" style="top:850.6px;font-size:47.7px;line-height:64px;left:886.5px;width:284.5px;color:#141414;letter-spacing:-2px;font-weight:300;-webkit-text-stroke:0.55px #c8d2ea;">第<span style="letter-spacing:0"> 1 </span>章<span class="sq"></span>序論</div>
<svg style="left:1173px;top:868px" width="30" height="32" viewBox="0 0 30 32" fill="none" stroke="#5f9cea" stroke-width="3" stroke-linecap="round" stroke-linejoin="round"><path d="M26.6 4.5 V19.5 H3.5 M11.5 11 L3 19.5 L11.5 28"/></svg>
<div class="t j" style="top:956.1px;font-size:31.3px;line-height:44px;left:886.5px;width:1269px;color:#111;letter-spacing:-1.3px;">近年<span class="l">, </span>市場競争の激化に伴い<span class="l">, </span>企業が有するブランドの価値はますます重要性を増している。</div>
<div class="t j" style="top:1011.8px;font-size:31.3px;line-height:44px;left:886.5px;width:1263px;color:#111;letter-spacing:-1.3px;">本研究では<span class="fc">,</span>ブランド価値が消費者態度に与える影響について<span class="fc">,</span>既存研究の整理と簡単な分</div>
<div class="t j" style="top:1067.5px;font-size:31.3px;line-height:44px;left:886.5px;width:312px;color:#111;letter-spacing:-1.3px;">析を通じて検討する。</div>
<svg style="left:1197.5px;top:1080.44px" width="21" height="23" viewBox="0 0 21 23" fill="none" stroke="#7db1e6" stroke-width="2" stroke-linecap="round" stroke-linejoin="round"><path d="M18.2 3 V13.4 H2.6 M8 7.8 L2.3 13.4 L8 19"/></svg>
<div class="t j" style="top:1123.3px;font-size:31.3px;line-height:44px;left:886.5px;width:373px;color:#111;letter-spacing:-1.3px;">第<span class="l"> 2 </span>章<span class="sq"></span>先行研究レビュー</div>
<svg style="left:1261px;top:1136.16px" width="21" height="23" viewBox="0 0 21 23" fill="none" stroke="#7db1e6" stroke-width="2" stroke-linecap="round" stroke-linejoin="round"><path d="M18.2 3 V13.4 H2.6 M8 7.8 L2.3 13.4 L8 19"/></svg>
<div class="t j" style="top:1179.0px;font-size:31.3px;line-height:44px;left:886.5px;width:336px;color:#111;letter-spacing:-1.3px;"><span class="l">2.1</span><span class="m">·</span><span class="l"> </span>ブランド価値の概念</div>
<svg style="left:1224.5px;top:1191.88px" width="21" height="23" viewBox="0 0 21 23" fill="none" stroke="#7db1e6" stroke-width="2" stroke-linecap="round" stroke-linejoin="round"><path d="M18.2 3 V13.4 H2.6 M8 7.8 L2.3 13.4 L8 19"/></svg>
<div class="t j" style="top:1234.7px;font-size:31.3px;line-height:44px;left:886.5px;width:1263px;color:#111;letter-spacing:-1.3px;">ブランド価値（<span class="l">Brand</span><span class="m">·</span><span class="l">Equity</span>）とは<span class="fc">,</span>ブランド名やシンボルによって製品やサービスにもた</div>
<div class="t j" style="top:1290.4px;font-size:31.3px;line-height:44px;left:886.5px;width:432px;color:#111;letter-spacing:-1.3px;">らされる付加的な価値を指す。</div>
<svg style="left:1317.5px;top:1303.32px" width="21" height="23" viewBox="0 0 21 23" fill="none" stroke="#7db1e6" stroke-width="2" stroke-linecap="round" stroke-linejoin="round"><path d="M18.2 3 V13.4 H2.6 M8 7.8 L2.3 13.4 L8 19"/></svg>
<div class="t j" style="top:1346.1px;font-size:31.3px;line-height:44px;left:886.5px;width:399px;color:#111;letter-spacing:-1.3px;"><span class="l">2.2</span><span class="m">·</span><span class="l"> </span>消費者態度に関する研究</div>
<svg style="left:1287px;top:1359.04px" width="21" height="23" viewBox="0 0 21 23" fill="none" stroke="#7db1e6" stroke-width="2" stroke-linecap="round" stroke-linejoin="round"><path d="M18.2 3 V13.4 H2.6 M8 7.8 L2.3 13.4 L8 19"/></svg>
<div class="t j" style="top:1401.9px;font-size:31.3px;line-height:44px;left:886.5px;width:1183px;color:#111;letter-spacing:-1.3px;">消費者態度は<span class="fc">,</span>認知的要素<span class="fc">,</span>感情的要素<span class="fc">,</span>行動的要素から構成されるとされている。</div>
<svg style="left:2070.5px;top:1414.76px" width="21" height="23" viewBox="0 0 21 23" fill="none" stroke="#7db1e6" stroke-width="2" stroke-linecap="round" stroke-linejoin="round"><path d="M18.2 3 V13.4 H2.6 M8 7.8 L2.3 13.4 L8 19"/></svg>
<div class="t j" style="top:1457.6px;font-size:31.3px;line-height:44px;left:886.5px;width:249.5px;color:#111;letter-spacing:-1.3px;">第<span class="l"> 3 </span>章<span class="sq"></span>研究方法</div>
<svg style="left:1136px;top:1470.48px" width="21" height="23" viewBox="0 0 21 23" fill="none" stroke="#7db1e6" stroke-width="2" stroke-linecap="round" stroke-linejoin="round"><path d="M18.2 3 V13.4 H2.6 M8 7.8 L2.3 13.4 L8 19"/></svg>
<div class="t j" style="top:1513.3px;font-size:31.3px;line-height:44px;left:886.5px;width:1263px;color:#111;letter-spacing:-1.3px;">本研究では<span class="fc">,</span>大学生を対象とした質問紙調査を実施し<span class="fc">,</span>ブランド価値と購買意図との関係を</div>
<div class="t j" style="top:1569.0px;font-size:31.3px;line-height:44px;left:886.5px;width:155.5px;color:#111;letter-spacing:-1.3px;">分析する。</div>
<svg style="left:1041.5px;top:1581.92px" width="21" height="23" viewBox="0 0 21 23" fill="none" stroke="#7db1e6" stroke-width="2" stroke-linecap="round" stroke-linejoin="round"><path d="M18.2 3 V13.4 H2.6 M8 7.8 L2.3 13.4 L8 19"/></svg>
<div class="t j" style="top:1624.7px;font-size:31.3px;line-height:44px;left:886.5px;width:249.5px;color:#111;letter-spacing:-1.3px;">第<span class="l"> 4 </span>章<span class="sq"></span>分析結果</div>
<svg style="left:1136px;top:1637.6399999999999px" width="21" height="23" viewBox="0 0 21 23" fill="none" stroke="#7db1e6" stroke-width="2" stroke-linecap="round" stroke-linejoin="round"><path d="M18.2 3 V13.4 H2.6 M8 7.8 L2.3 13.4 L8 19"/></svg>
<div class="t j" style="top:1680.5px;font-size:31.3px;line-height:44px;left:886.5px;width:1263px;color:#111;letter-spacing:-1.3px;">分析の結果<span class="l">, </span>ブランド価値は購買意図に対して統計的に有意な正の影響を及ぼすことが確認</div>
<div class="t j" style="top:1736.2px;font-size:31.3px;line-height:44px;left:886.5px;width:124.5px;color:#111;letter-spacing:-1.3px;">された。</div>
<svg style="left:1009.5px;top:1749.08px" width="21" height="23" viewBox="0 0 21 23" fill="none" stroke="#7db1e6" stroke-width="2" stroke-linecap="round" stroke-linejoin="round"><path d="M18.2 3 V13.4 H2.6 M8 7.8 L2.3 13.4 L8 19"/></svg>
<div class="t j" style="top:1791.9px;font-size:31.3px;line-height:44px;left:886.5px;width:187px;color:#111;letter-spacing:-1.3px;">第<span class="l"> 5 </span>章<span class="sq"></span>考察</div>
<svg style="left:1074px;top:1804.8px" width="21" height="23" viewBox="0 0 21 23" fill="none" stroke="#7db1e6" stroke-width="2" stroke-linecap="round" stroke-linejoin="round"><path d="M18.2 3 V13.4 H2.6 M8 7.8 L2.3 13.4 L8 19"/></svg>
<div class="t j" style="top:1847.6px;font-size:31.3px;line-height:44px;left:886.5px;width:1271px;color:#111;letter-spacing:-1.3px;">本結果は<span class="fc">,</span>先行研究と整合的であり<span class="fc">,</span>ブランド構築の重要性を改めて示唆するものである。</div>
<svg style="left:2149.5px;top:1860.52px" width="21" height="23" viewBox="0 0 21 23" fill="none" stroke="#7db1e6" stroke-width="2" stroke-linecap="round" stroke-linejoin="round"><path d="M18.2 3 V13.4 H2.6 M8 7.8 L2.3 13.4 L8 19"/></svg>
<div style="left:44.5px;top:1884px;width:2952px;height:34px;background:#ebebeb"></div>
<div style="left:49.5px;top:1891.5px;width:2934.5px;height:19px;background:linear-gradient(#f6f6f6,#fbfbfb 30%,#fbfbfb)"></div>
<div style="left:2997.8px;top:402px;width:18.4px;height:1475.6px;background:#f8f8f8"></div>
<div style="left:2992px;top:1886px;width:28px;height:28.2px;background:#f8f8f8"></div>
<div style="left:3000px;top:408px;width:16px;height:844px;background:#7d7d7d;border-radius:8px"></div>
<svg style="left:1860px;top:366px" width="96" height="24" viewBox="1860 366 96 24"><path d="M1872 388 C1882 387 1888 372 1907 372 C1926 372 1932 387 1942 388 Z" fill="#fff"/></svg>
<div style="left:1580px;top:386.5px;width:640px;height:544px;background:#fff;border-radius:30px;box-shadow:0 0 0 1px rgba(0,0,0,.10),0 12px 38px rgba(0,0,0,.22),0 2px 8px rgba(0,0,0,.10)"></div>
<div style="left:1880px;top:386.5px;width:56px;height:6px;background:#fff"></div>
<div style="left:1901px;top:394px;width:159px;height:112.5px;background:#e2e8f5;border:2px solid #8ea5d3;border-radius:9px"></div>
<div style="left:1590px;top:404px;width:139.6px;height:92px;background:#fff;border:1px solid #dbdbdb;border-radius:5px;box-shadow:0 1px 1.5px rgba(0,0,0,.12);overflow:hidden"></div>
<div style="left:1591px;top:468px;width:137.6px;height:27px;background:linear-gradient(#f1f1f1,#e8e8e8);border-radius:0 0 4px 4px"></div>
<div class="t" style="top:467.6px;font-size:17px;line-height:24px;left:1590.3px;width:139px;text-align:center;color:#1a1a1a;-webkit-text-stroke:0.35px #1a1a1a;">標準</div>
<div class="t" style="top:413.5px;font-size:20px;line-height:40px;left:1590.3px;width:139px;text-align:center;color:#444;-webkit-text-stroke:0.5px #444;">あア亜</div>
<div style="left:1750px;top:404px;width:139.6px;height:92px;background:#fff;border:1px solid #dbdbdb;border-radius:5px;box-shadow:0 1px 1.5px rgba(0,0,0,.12);overflow:hidden"></div>
<div style="left:1751px;top:468px;width:137.6px;height:27px;background:linear-gradient(#f1f1f1,#e8e8e8);border-radius:0 0 4px 4px"></div>
<div class="t" style="top:467.6px;font-size:17px;line-height:24px;left:1750.3px;width:139px;text-align:center;color:#1a1a1a;-webkit-text-stroke:0.35px #1a1a1a;">行間詰め</div>
<div class="t" style="top:413.5px;font-size:20px;line-height:40px;left:1750.3px;width:139px;text-align:center;color:#444;-webkit-text-stroke:0.5px #444;">あア亜</div>
<div style="left:1910px;top:404px;width:139.6px;height:92px;background:#fff;border:1px solid #dbdbdb;border-radius:5px;box-shadow:0 1px 1.5px rgba(0,0,0,.12);overflow:hidden"></div>
<div style="left:1911px;top:468px;width:137.6px;height:27px;background:linear-gradient(#f1f1f1,#e8e8e8);border-radius:0 0 4px 4px"></div>
<div class="t" style="top:467.6px;font-size:17px;line-height:24px;left:1910.3px;width:139px;text-align:center;color:#1a1a1a;-webkit-text-stroke:0.35px #1a1a1a;">見出し 1</div>
<div class="t" style="top:413.5px;font-size:30.5px;line-height:40px;left:1910.3px;width:139px;text-align:center;color:#444;font-weight:300;-webkit-text-stroke:0.7px #fff;">あア亜</div>
<div style="left:2070px;top:404px;width:139.6px;height:92px;background:#fff;border:1px solid #dbdbdb;border-radius:5px;box-shadow:0 1px 1.5px rgba(0,0,0,.12);overflow:hidden"></div>
<div style="left:2071px;top:468px;width:137.6px;height:27px;background:linear-gradient(#f1f1f1,#e8e8e8);border-radius:0 0 4px 4px"></div>
<div class="t" style="top:467.6px;font-size:17px;line-height:24px;left:2070.3px;width:139px;text-align:center;color:#1a1a1a;-webkit-text-stroke:0.35px #1a1a1a;">見出し 2</div>
<div class="t" style="top:413.5px;font-size:27px;line-height:40px;left:2070.3px;width:139px;text-align:center;color:#484848;font-weight:300;-webkit-text-stroke:0.6px #fff;">あア亜</div>
<div style="left:1590px;top:518.4px;width:139.6px;height:92px;background:#fff;border:1px solid #dbdbdb;border-radius:5px;box-shadow:0 1px 1.5px rgba(0,0,0,.12);overflow:hidden"></div>
<div style="left:1591px;top:582.4px;width:137.6px;height:27px;background:linear-gradient(#f1f1f1,#e8e8e8);border-radius:0 0 4px 4px"></div>
<div class="t" style="top:582.0px;font-size:17px;line-height:24px;left:1590.3px;width:139px;text-align:center;color:#1a1a1a;-webkit-text-stroke:0.35px #1a1a1a;">表題</div>
<div style="left:1595px;top:519.4px;width:129.2px;height:63px;overflow:hidden"><div class="t" style="left:5.5px;top:-1.5px;font-size:49px;line-height:66px;color:#1a1a1a;letter-spacing:2.5px;-webkit-text-stroke:0.9px #fff;font-weight:300;">あア亜</div></div>
<div style="left:1750px;top:518.4px;width:139.6px;height:92px;background:#fff;border:1px solid #dbdbdb;border-radius:5px;box-shadow:0 1px 1.5px rgba(0,0,0,.12);overflow:hidden"></div>
<div style="left:1751px;top:582.4px;width:137.6px;height:27px;background:linear-gradient(#f1f1f1,#e8e8e8);border-radius:0 0 4px 4px"></div>
<div class="t" style="top:582.0px;font-size:17px;line-height:24px;left:1750.3px;width:139px;text-align:center;color:#1a1a1a;-webkit-text-stroke:0.35px #1a1a1a;">副題</div>
<div class="t" style="top:527.9px;font-size:26px;line-height:40px;left:1750.3px;width:139px;text-align:center;color:#8c8c8c;font-weight:300;letter-spacing:4px;-webkit-text-stroke:0.6px #fff;">あア亜</div>
<div style="left:1910px;top:518.4px;width:139.6px;height:92px;background:#fff;border:1px solid #dbdbdb;border-radius:5px;box-shadow:0 1px 1.5px rgba(0,0,0,.12);overflow:hidden"></div>
<div style="left:1911px;top:582.4px;width:137.6px;height:27px;background:linear-gradient(#f1f1f1,#e8e8e8);border-radius:0 0 4px 4px"></div>
<div class="t" style="top:582.0px;font-size:17px;line-height:24px;left:1910.3px;width:139px;text-align:center;color:#1a1a1a;-webkit-text-stroke:0.35px #1a1a1a;">斜体</div>
<div class="t" style="top:527.9px;font-size:19px;line-height:40px;left:1910.3px;width:139px;text-align:center;color:#777;font-style:italic;">あア亜</div>
<div style="left:2070px;top:518.4px;width:139.6px;height:92px;background:#fff;border:1px solid #dbdbdb;border-radius:5px;box-shadow:0 1px 1.5px rgba(0,0,0,.12);overflow:hidden"></div>
<div style="left:2071px;top:582.4px;width:137.6px;height:27px;background:linear-gradient(#f1f1f1,#e8e8e8);border-radius:0 0 4px 4px"></div>
<div class="t" style="top:582.0px;font-size:17px;line-height:24px;left:2070.3px;width:139px;text-align:center;color:#1a1a1a;-webkit-text-stroke:0.35px #1a1a1a;">強調斜体</div>
<div class="t" style="top:527.9px;font-size:19px;line-height:40px;left:2070.3px;width:139px;text-align:center;color:#444;font-style:italic;font-weight:bold;">あア亜</div>
<div style="left:1590px;top:632.4px;width:139.6px;height:92px;background:#fff;border:1px solid #dbdbdb;border-radius:5px;box-shadow:0 1px 1.5px rgba(0,0,0,.12);overflow:hidden"></div>
<div style="left:1591px;top:696.4px;width:137.6px;height:27px;background:linear-gradient(#f1f1f1,#e8e8e8);border-radius:0 0 4px 4px"></div>
<div class="t" style="top:696.0px;font-size:17px;line-height:24px;left:1590.3px;width:139px;text-align:center;color:#1a1a1a;-webkit-text-stroke:0.35px #1a1a1a;">強調斜体 2</div>
<div class="t" style="top:641.9px;font-size:19px;line-height:40px;left:1590.3px;width:139px;text-align:center;color:#5b87b8;font-style:italic;font-weight:bold;">あア亜</div>
<div style="left:1750px;top:632.4px;width:139.6px;height:92px;background:#fff;border:1px solid #dbdbdb;border-radius:5px;box-shadow:0 1px 1.5px rgba(0,0,0,.12);overflow:hidden"></div>
<div style="left:1751px;top:696.4px;width:137.6px;height:27px;background:linear-gradient(#f1f1f1,#e8e8e8);border-radius:0 0 4px 4px"></div>
<div class="t" style="top:696.0px;font-size:17px;line-height:24px;left:1750.3px;width:139px;text-align:center;color:#1a1a1a;-webkit-text-stroke:0.35px #1a1a1a;">強調太字</div>
<div class="t" style="top:641.9px;font-size:20px;line-height:40px;left:1750.3px;width:139px;text-align:center;color:#111;font-weight:bold;-webkit-text-stroke:0.8px #111;">あア亜</div>
<div style="left:1910px;top:632.4px;width:139.6px;height:92px;background:#fff;border:1px solid #dbdbdb;border-radius:5px;box-shadow:0 1px 1.5px rgba(0,0,0,.12);overflow:hidden"></div>
<div style="left:1911px;top:696.4px;width:137.6px;height:27px;background:linear-gradient(#f1f1f1,#e8e8e8);border-radius:0 0 4px 4px"></div>
<div class="t" style="top:696.0px;font-size:17px;line-height:24px;left:1910.3px;width:139px;text-align:center;color:#1a1a1a;-webkit-text-stroke:0.35px #1a1a1a;">引用文</div>
<div class="t" style="top:641.9px;font-size:19px;line-height:40px;left:1910.3px;width:139px;text-align:center;color:#7a7a7a;font-style:italic;">あア亜</div>
<div style="left:2070px;top:632.4px;width:139.6px;height:92px;background:#fff;border:1px solid #dbdbdb;border-radius:5px;box-shadow:0 1px 1.5px rgba(0,0,0,.12);overflow:hidden"></div>
<div style="left:2071px;top:696.4px;width:137.6px;height:27px;background:linear-gradient(#f1f1f1,#e8e8e8);border-radius:0 0 4px 4px"></div>
<div class="t" style="top:696.0px;font-size:17px;line-height:24px;left:2070.3px;width:139px;text-align:center;color:#1a1a1a;-webkit-text-stroke:0.35px #1a1a1a;">引用文 2</div>
<div class="t" style="top:641.9px;font-size:19px;line-height:40px;left:2070.3px;width:139px;text-align:center;color:#5b87b8;font-style:italic;font-weight:bold;">あア亜</div>
<div style="left:2076px;top:643.4px;width:127.6px;height:2px;background:#2f5d8c"></div>
<div style="left:2076px;top:679.4px;width:127.6px;height:2px;background:#2f5d8c"></div>
<div style="left:1590px;top:746.2px;width:139.6px;height:92px;background:#fff;border:1px solid #dbdbdb;border-radius:5px;box-shadow:0 1px 1.5px rgba(0,0,0,.12);overflow:hidden"></div>
<div style="left:1591px;top:810.2px;width:137.6px;height:27px;background:linear-gradient(#f1f1f1,#e8e8e8);border-radius:0 0 4px 4px"></div>
<div class="t" style="top:809.8px;font-size:17px;line-height:24px;left:1590.3px;width:139px;text-align:center;color:#1a1a1a;-webkit-text-stroke:0.35px #1a1a1a;">参照</div>
<div class="t" style="top:755.7px;font-size:19.5px;line-height:40px;left:1590.3px;width:139px;text-align:center;color:#8a8a8a;">あア亜</div>
<div style="left:1750px;top:746.2px;width:139.6px;height:92px;background:#fff;border:1px solid #dbdbdb;border-radius:5px;box-shadow:0 1px 1.5px rgba(0,0,0,.12);overflow:hidden"></div>
<div style="left:1751px;top:810.2px;width:137.6px;height:27px;background:linear-gradient(#f1f1f1,#e8e8e8);border-radius:0 0 4px 4px"></div>
<div class="t" style="top:809.8px;font-size:17px;line-height:24px;left:1750.3px;width:139px;text-align:center;color:#1a1a1a;-webkit-text-stroke:0.35px #1a1a1a;">参照 2</div>
<div class="t" style="top:755.7px;font-size:20px;line-height:40px;left:1750.3px;width:139px;text-align:center;color:#1f4e79;font-weight:bold;-webkit-text-stroke:0.8px #1f4e79;">あア亜</div>
<div style="left:1910px;top:746.2px;width:139.6px;height:92px;background:#fff;border:1px solid #dbdbdb;border-radius:5px;box-shadow:0 1px 1.5px rgba(0,0,0,.12);overflow:hidden"></div>
<div style="left:1911px;top:810.2px;width:137.6px;height:27px;background:linear-gradient(#f1f1f1,#e8e8e8);border-radius:0 0 4px 4px"></div>
<div class="t" style="top:809.8px;font-size:17px;line-height:24px;left:1910.3px;width:139px;text-align:center;color:#1a1a1a;-webkit-text-stroke:0.35px #1a1a1a;">書名</div>
<div class="t" style="top:755.7px;font-size:20px;line-height:40px;left:1910.3px;width:139px;text-align:center;color:#111;font-style:italic;font-weight:bold;-webkit-text-stroke:0.8px #111;">あア亜</div>
<div style="left:2070px;top:746.2px;width:139.6px;height:92px;background:#fff;border:1px solid #dbdbdb;border-radius:5px;box-shadow:0 1px 1.5px rgba(0,0,0,.12);overflow:hidden"></div>
<div style="left:2071px;top:810.2px;width:137.6px;height:27px;background:linear-gradient(#f1f1f1,#e8e8e8);border-radius:0 0 4px 4px"></div>
<div class="t" style="top:809.8px;font-size:17px;line-height:24px;left:2070.3px;width:139px;text-align:center;color:#1a1a1a;-webkit-text-stroke:0.35px #1a1a1a;">リスト段落</div>
<div class="t" style="top:755.7px;font-size:20px;line-height:40px;left:2070.3px;width:139px;text-align:center;color:#444;-webkit-text-stroke:0.5px #444;">あア亜</div>
<div style="left:1580px;top:861.5px;width:640px;height:4.5px;background:#ececec"></div>
<svg style="left:1616px;top:872px" width="50" height="50" viewBox="1616 872 50 50"><path d="M1623 905.2 L1632.6 879.6 L1642.2 905.2 M1626.4 896.4 H1638.8" fill="none" stroke="#3a3a3a" stroke-width="2.3" stroke-linejoin="round"/><path d="M1638.6 905 L1649.4 895 L1658.4 904.2 L1647.6 914.4 Z" fill="#fff" stroke="#9b4fb0" stroke-width="2.2" stroke-linejoin="round"/><path d="M1638.6 905 L1642.6 901.2 L1651.6 910.6 L1647.6 914.4 Z" fill="#c58ad6" stroke="#9b4fb0" stroke-width="1.6" stroke-linejoin="round"/></svg>
<div class="t" style="top:879.4px;font-size:25.5px;line-height:36px;left:1669px;color:#222;letter-spacing:-0.9px;">書式のクリア</div>
<div class="t" style="left:1873.2px;top:314.7px;width:67.6px;height:67.6px;border-radius:50%;background:#f09135;box-shadow:0 2px 6px rgba(0,0,0,.22);color:#fff;font-weight:bold;font-size:46px;line-height:67.6px;text-align:center">2</div>
<div class="t" style="left:1887.8px;top:408.4px;width:67.6px;height:67.6px;border-radius:50%;background:#f09135;box-shadow:0 2px 6px rgba(0,0,0,.22);color:#fff;font-weight:bold;font-size:46px;line-height:67.6px;text-align:center">3</div>
<div class="t" style="left:822.2px;top:848.8px;width:67.6px;height:67.6px;border-radius:50%;background:#f09135;box-shadow:0 2px 6px rgba(0,0,0,.22);color:#fff;font-weight:bold;font-size:46px;line-height:67.6px;text-align:center">1</div>
<div style="left:2846px;top:1740px;width:88px;height:88px;background:#fafafa;border-radius:50%;box-shadow:0 6px 28px rgba(0,0,0,.17),0 2px 50px rgba(0,0,0,.06),0 0 0 .5px rgba(0,0,0,.04)"></div>
<svg style="left:2846px;top:1740px" width="88" height="88" viewBox="268 310 904 905"><defs><linearGradient id="cg1" x1="0" y1="0" x2="0" y2="1"><stop offset="0" stop-color="#3b8fe8"/><stop offset=".55" stop-color="#62b86a"/><stop offset="1" stop-color="#f8c51c"/></linearGradient><linearGradient id="cg2" x1="0" y1="0" x2="0" y2="1"><stop offset="0" stop-color="#a457f0"/><stop offset=".5" stop-color="#ea5a8f"/><stop offset="1" stop-color="#f3a24a"/></linearGradient><linearGradient id="cg3" x1="0" y1="0" x2="0" y2="1"><stop offset="0" stop-color="#1f49c4"/><stop offset="1" stop-color="#3f7ee0"/></linearGradient><linearGradient id="cg4" x1="0" y1="0" x2="0" y2="1"><stop offset="0" stop-color="#f08a4a"/><stop offset="1" stop-color="#e0572f"/></linearGradient></defs><path d="M745 560 C800 548 822 585 836 640 C842 660 850 668 870 672 L770 676 C735 676 728 640 745 560 Z" fill="url(#cg3)"/><path d="M600 852 L725 852 C708 915 695 962 660 968 C628 962 622 905 600 852 Z" fill="url(#cg4)"/><path d="M592 557 L770 557 C735 600 712 700 668 852 L600 852 C530 850 492 822 500 760 C515 640 540 560 592 557 Z" fill="url(#cg1)"/><path d="M785 672 L880 672 C935 674 955 720 942 795 C925 900 900 962 842 968 L690 968 C735 905 755 762 785 672 Z" fill="url(#cg2)"/></svg>
<div style="left:0px;top:1917.5px;width:3024px;height:46.5px;background:linear-gradient(#e7e7e7,#d5d5d5);border-top:2px solid #9e9e9e"></div>
<div style="left:2312px;top:1919.5px;width:74px;height:44.5px;background:#a9a9a9"></div>
<div class="t" style="top:1926.6px;font-size:22.5px;line-height:30px;left:49px;color:#525252;letter-spacing:-1px;">1/1 ページ</div>
<div class="t" style="top:1926.6px;font-size:22.5px;line-height:30px;left:193.5px;color:#525252;letter-spacing:0.6px;">5/450 文字</div>
<div class="t" style="top:1926.6px;font-size:22px;line-height:30px;left:420px;color:#525252;">日本語</div>
<div class="t" style="top:1926.6px;font-size:22px;line-height:30px;left:631.5px;color:#525252;letter-spacing:-0.55px;">アクセシビリティ: 問題ありません</div>
<div class="t" style="top:1926.2px;font-size:22px;line-height:30px;left:2182.5px;color:#525252;letter-spacing:-0.5px;">フォーカス</div>
<div class="t" style="top:1926.6px;font-size:24px;line-height:30px;left:2911px;color:#525252;">149%</div>
<svg style="left:0;top:1920px" width="3024" height="44" viewBox="0 1920 3024 44" fill="none" stroke="#555" stroke-width="1.9" stroke-linecap="round" stroke-linejoin="round"><svg x="330" y="1915" width="320" height="48.94" viewBox="0 0 2380 364" stroke="#666" stroke-width="15" fill="none" stroke-linecap="round" stroke-linejoin="round"><path d="M243 283 V116 C243 106 235 100 225 100 H162 Q152 100 152 110 V240 Q152 250 162 250 H222 C236 250 243 258 243 268"/><path d="M243 116 C243 106 251 100 261 100 H333 M243 268 C243 258 250 250 264 250 H333"/><path d="M285 180 L312 208 L374 136"/><circle cx="1495" cy="121" r="38" fill="#666" stroke="none"/><path d="M1495 150 V250 M1540 100 H1650 M1640 104 V252 Q1640 285 1604 285"/><path d="M1636 100 H1650 Q1682 100 1682 136 H1636 Z" fill="#666" stroke-width="6"/><path d="M1460 252 H1600 V268 Q1600 285 1584 285 H1482 Q1460 285 1460 262 Z" fill="#666" stroke-width="6"/><circle cx="2030" cy="116" r="22"/><path d="M1943 138 C1937 152 1950 161 1968 167 L2000 179 C2005 215 1997 246 1977 268 C1967 281 1978 295 1993 290"/><path d="M2117 138 C2123 152 2110 161 2092 167 L2062 179 C2060 196 2062 210 2067 222"/><path d="M2043 268 L2082 300 L2164 216"/></svg><rect x="2134.8" y="1930" width="28.6" height="21.4" rx="2.4"/><path d="M2139.4 1939 V1934.6 H2143.8 M2154.4 1934.6 H2158.8 V1939 M2158.8 1942.4 V1946.8 H2154.4 M2143.8 1946.8 H2139.4 V1942.4" stroke-width="1.7"/><g stroke="#fff"><rect x="2335.6" y="1929.2" width="26.8" height="24" rx="1.5" fill="#fff" stroke-width="1.6"/></g><path d="M2339 1933.6 H2359 M2339 1937.4 H2359 M2339 1941.2 H2359 M2339 1945 H2359 M2339 1948.8 H2359" stroke="#a9a9a9" stroke-width="1.7"/><path d="M2420 1950.6 H2405.6 V1929.4 H2429.4 V1938"/><path d="M2409.6 1934 H2425.4 M2409.6 1938.2 H2424 M2409.6 1942.4 H2419 M2409.6 1946.4 H2417.4" stroke-width="1.6"/><circle cx="2428.6" cy="1946.8" r="7.9" fill="#555" stroke="none"/><path d="M2424 1943.4 C2426 1942 2428 1942.8 2428.6 1944.6 C2429.4 1946.6 2427.4 1947.6 2427.6 1949.6 C2427.8 1951 2428.8 1951.8 2429.6 1952.8 M2431.2 1941 C2430.4 1942.6 2431.4 1944 2433 1944.2 C2434.4 1944.4 2435 1945.6 2434.8 1947" stroke="#e2e2e2" stroke-width="1.5"/><path d="M2479.4 1932.6 H2482 M2486.8 1932.6 H2506.8 M2484.6 1938.8 H2487.2 M2492 1938.8 H2506.8 M2484.6 1945 H2487.2 M2492 1945 H2506.8 M2479.4 1951.2 H2482 M2486.8 1951.2 H2501" stroke-width="2"/><path d="M2550.4 1932.6 H2576.8 M2550.4 1938.8 H2576.8 M2550.4 1945 H2576.8 M2550.4 1951.2 H2567.4" stroke-width="2"/><path d="M2617.4 1941 H2631" stroke="#666" stroke-width="4.4" stroke-linecap="butt"/><path d="M2860.6 1941 H2876 M2868.3 1933.3 V1948.7" stroke="#555" stroke-width="3.6" stroke-linecap="butt"/></svg>
<div style="left:2645.5px;top:1936.8px;width:200.5px;height:8.8px;background:#a5a5a5;border-radius:4.4px"></div>
<div style="left:2737px;top:1926.6px;width:37px;height:28px;background:#fff;border-radius:14px;box-shadow:0 1px 2.5px rgba(0,0,0,.28)"></div>
</body>
</html>
